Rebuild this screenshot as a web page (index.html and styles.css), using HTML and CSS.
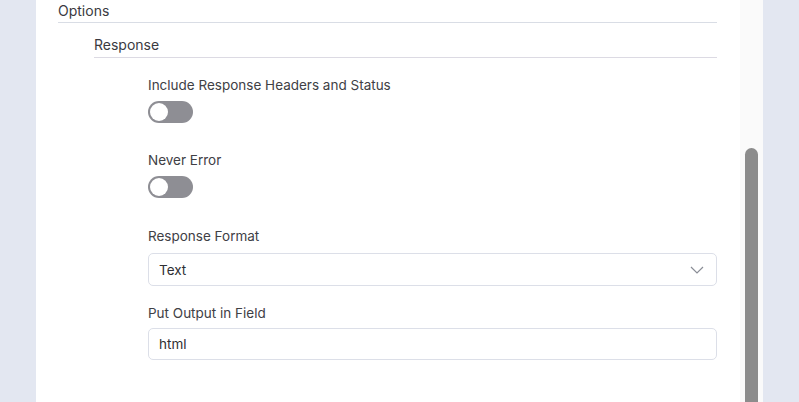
FILE: index.html
```html
<!DOCTYPE html>
<html>
<head>
<meta charset="utf-8">
<link rel="stylesheet" href="styles.css">
</head>
<body>
<div class="gutter"></div>
<main class="panel">
  <div class="section-title">Options</div>
  <section class="subsection">
    <div class="subsection-title">Response</div>
    <div class="fields">
      <div class="field">
        <label class="label">Include Response Headers and Status</label>
        <span class="toggle"><span class="knob"></span></span>
      </div>
      <div class="field field-toggle-last">
        <label class="label">Never Error</label>
        <span class="toggle"><span class="knob"></span></span>
      </div>
      <div class="field field-select">
        <label class="label">Response Format</label>
        <div class="select">
          <span>Text</span>
          <svg class="chevron" width="14" height="8" viewBox="0 0 14 8"><path d="M1 1l6 6 6-6" fill="none" stroke="#8a8d96" stroke-width="1.2"/></svg>
        </div>
      </div>
      <div class="field field-input">
        <label class="label">Put Output in Field</label>
        <div class="input">html</div>
      </div>
    </div>
  </section>
</main>
<div class="scroll-track"><div class="scroll-thumb"></div></div>
<div class="gutter-right"></div>
</body>
</html>
```
FILE: styles.css
```css
* { box-sizing: border-box; }
html, body { height: 100%; }
body {
  margin: 0;
  display: flex;
  background: #e3e7f1;
  font-family: Inter, "Noto Sans", sans-serif;
  color: #3a3a3f;
  overflow: hidden;
}
.gutter { width: 36px; flex: none; }
.panel {
  width: 704px;
  flex: none;
  background: #fff;
  padding: 1px 23px 0 22px;
}
.section-title {
  font-size: 14px;
  line-height: 20px;
  padding-bottom: 1px;
  border-bottom: 1px solid #d9dde5;
}
.subsection { margin-left: 36px; margin-top: 12px; }
.subsection-title {
  font-size: 14px;
  line-height: 20px;
  padding-bottom: 2px;
  border-bottom: 1px solid #dcdae3;
}
.fields { margin-left: 54px; padding-top: 18px; }
.field { display: flex; flex-direction: column; align-items: flex-start; margin-bottom: 28px; }
.field-toggle-last { margin-bottom: 29px; }
.field-select { margin-bottom: 18px; }
.label { font-size: 13.5px; line-height: 18px; color: #404045; }
.toggle {
  margin-top: 7px;
  width: 45px;
  height: 22px;
  border-radius: 11px;
  background: #8e8e94;
  display: flex;
  align-items: center;
  padding-left: 2px;
}
.knob {
  width: 18px; height: 18px;
  border-radius: 50%;
  background: #fff;
}
.select, .input {
  margin-top: 8px;
  align-self: stretch;
  height: 33px;
  border: 1px solid #dcdfe8;
  border-radius: 5px;
  font-size: 13.5px;
  display: flex;
  align-items: center;
  padding: 0 10px;
  color: #2f2f33;
}
.select { justify-content: space-between; }
.chevron { margin-right: 2px; }
.field-input .input { margin-top: 6px; height: 32px; }
.scroll-track {
  width: 23px;
  flex: none;
  background: #fafafa;
  padding: 148px 5px 0;
  display: flex;
}
.scroll-thumb {
  flex: 1;
  background: #8c8c8c;
  border-radius: 7px 7px 0 0;
}
.gutter-right { flex: 1; }
```
